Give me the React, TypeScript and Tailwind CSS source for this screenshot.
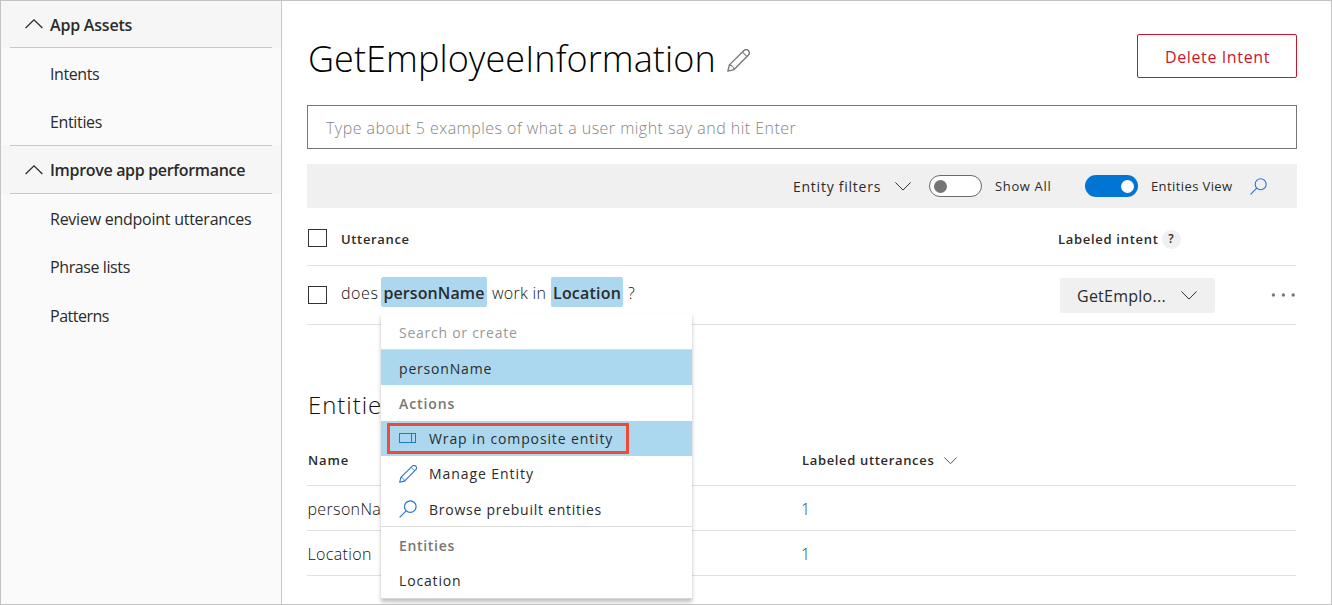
import type { ReactNode } from "react";

function ChevronUp() {
  return (
    <svg width="18" height="10" viewBox="0 0 18 10" fill="none" stroke="#2b2b2b" strokeWidth="1.3">
      <path d="M0.6 9 L9 0.9 L17.4 9" />
    </svg>
  );
}

function ChevronDown({ width, height }: { width: number; height: number }) {
  return (
    <svg width={width} height={height} viewBox="0 0 16 9" fill="none" stroke="#333" strokeWidth="1" className="shrink-0">
      <path d="M0.4 0.4 L8 8.1 L15.6 0.4" />
    </svg>
  );
}

function Pencil({ size, color }: { size: number; color: string }) {
  return (
    <svg width={size} height={size} viewBox="0 0 22 22" fill="none" stroke={color} strokeWidth="1.3" strokeLinejoin="round" className="shrink-0">
      <path d="M0.8 21.2 L2.3 15.2 L16.2 1.5 A2.8 2.8 0 0 1 20.5 5.8 L6.8 19.7 Z" />
      <path d="M2.3 15.2 C4.4 15.5 6.5 17.6 6.8 19.7" strokeWidth="1.1" />
      <path d="M14.8 2.9 L19.1 7.2" strokeWidth="1" />
    </svg>
  );
}

function Search({ size }: { size: number }) {
  return (
    <svg width={size} height={size} viewBox="0 0 18 18" fill="none" stroke="#2a72d4" strokeWidth="1.15" className="shrink-0">
      <circle cx="11.3" cy="6.6" r="5.8" />
      <path d="M7.1 10.8 L0.6 17.3" />
    </svg>
  );
}

function Composite() {
  return (
    <svg width="18" height="11" viewBox="0 0 18 11" fill="none" stroke="#1f78d1" strokeWidth="1" className="shrink-0">
      <rect x="0.5" y="0.5" width="16" height="9" />
      <path d="M12.5 0.5 V9.5" />
    </svg>
  );
}

function NavHeader({ children, first }: { children: ReactNode; first?: boolean }) {
  return (
    <div className={first ? "h-[47px] bg-[#f6f6f6] px-[9px]" : "h-[49px] bg-[#f6f6f6] px-[9px]"}>
      <div
        className={
          first
            ? "flex h-full items-center gap-[7px] border-b border-[#c8c8c8] pl-[15px]"
            : "flex h-full items-center gap-[7px] border-y border-[#c8c8c8] pl-[15px]"
        }
      >
        <ChevronUp />
        {children}
      </div>
    </div>
  );
}

function NavItem({ children }: { children: ReactNode }) {
  return <a className="flex h-12 items-center pl-[49px] text-base">{children}</a>;
}

function Checkbox() {
  return <span className="block h-[18px] w-[19px] shrink-0 border border-[#333]" />;
}

function EntityRow({ name, count }: { name: string; count: number }) {
  return (
    <div className="flex h-[45px] items-center border-b border-[#e1e1e1] pt-[2px] text-base font-light text-[#111]">
      <span className="w-[494px] pl-[0.5px] tracking-[0.35px]">
        <span className="block w-[73px] overflow-hidden">{name}</span>
      </span>
      <span className="text-[#1d3f66]">{count}</span>
    </div>
  );
}

export default function App() {
  return (
    <div className="flex h-[605px] w-[1332px] overflow-hidden border border-[#c3c3c3] bg-white font-['Open_Sans',sans-serif] whitespace-nowrap text-[#2b2b2b]">
      <aside className="flex w-[281px] shrink-0 flex-col border-r border-[#c8c8c8] bg-[#fafafa]">
        <NavHeader first>
          <span className="pt-[2px] text-base font-semibold tracking-[-0.2px]">App Assets</span>
        </NavHeader>
        <nav className="h-[97px] pt-[2px]">
          <NavItem><span className="tracking-[-0.4px]">Intents</span></NavItem>
          <NavItem><span className="tracking-[-0.35px]">Entities</span></NavItem>
        </nav>
        <NavHeader>
          <span className="text-base font-semibold tracking-[-0.32px]">Improve app performance</span>
        </NavHeader>
        <nav className="pt-[1px]">
          <NavItem><span className="tracking-[-0.25px]">Review endpoint utterances</span></NavItem>
          <NavItem><span className="tracking-[-0.4px]">Phrase lists</span></NavItem>
          <NavItem><span className="pt-px tracking-[-0.5px]">Patterns</span></NavItem>
        </nav>
      </aside>

      <main className="relative flex-1 pt-[33px] pr-[34px] pl-[25px]">
        <header className="flex h-11 items-center">
          <h1 className="pt-[6px] pl-px text-4xl leading-[44px] font-light tracking-[0.08px] text-black">GetEmployeeInformation</h1>
          <span className="ml-[11px] pt-[9px]"><Pencil size={23} color="#777" /></span>
          <button className="ml-auto h-11 w-40 rounded-[2px] border border-[#c9142b] pt-[2px] pl-px text-base tracking-[0.62px] text-[#c9142b]">
            Delete Intent
          </button>
        </header>

        <div className="mt-[27px] flex h-11 items-center border border-[#767676] pt-[2px] pl-[18px] text-base font-light tracking-[0.47px] text-[#858585]">
          Type about 5 examples of what a user might say and hit Enter
        </div>

        <div className="mt-[15px] flex h-11 items-center bg-[#f0f0f0] pl-[486px]">
          <span className="w-[102px] pt-[2px] text-sm tracking-[0.75px]">Entity filters</span>
          <ChevronDown width={16} height={9} />
          <span className="ml-[18px] flex h-[22px] w-[53px] items-center rounded-full border border-[#6b6b6b] bg-white pl-1">
            <span className="size-[13px] rounded-full bg-[#757575]" />
          </span>
          <span className="ml-[13px] w-[90px] pt-[2px] text-[13px] tracking-[0.65px]">Show All</span>
          <span className="flex h-[22px] w-[53px] items-center justify-end rounded-full bg-[#0075d4] pr-1">
            <span className="size-[13px] rounded-full bg-white" />
          </span>
          <span className="ml-[13px] w-[99px] pt-[2px] text-[13px] tracking-[0.4px]">Entities View</span>
          <Search size={17} />
        </div>

        <div className="mr-px flex h-[58px] items-center border-b border-[#e1e1e1] pt-[5px] text-[13px] font-semibold">
          <span className="-mt-[2px] ml-px"><Checkbox /></span>
          <span className="ml-[14px] w-[717px] pt-px tracking-[0.65px]">Utterance</span>
          <span className="pt-px tracking-[0.7px]">Labeled intent</span>
          <span className="ml-[3px] flex size-[19px] items-center justify-center rounded-full bg-[#f0f0f0] text-xs">?</span>
        </div>

        <div className="mr-px flex h-[59px] items-center border-b border-[#e1e1e1]">
          <span className="ml-px"><Checkbox /></span>
          <div className="ml-[14px] flex w-[719px] items-center pb-[6px] text-base font-light text-[#111]">
            <span className="w-10 pt-[2px] tracking-[0.6px]">does</span>
            <b className="flex h-[30px] w-[106px] items-center justify-center rounded-[2px] bg-[#acd8ef] pt-[2px] font-semibold tracking-[0.1px] text-[#2b2b2b]">personName</b>
            <span className="w-16 pt-[2px] pl-[5px] tracking-[0.3px]">work in</span>
            <b className="flex h-[30px] w-[72px] items-center justify-center rounded-[2px] bg-[#acd8ef] pt-[2px] font-semibold tracking-[0.2px] text-[#2b2b2b]">Location</b>
            <span className="pt-[2px] pl-[5px]">?</span>
          </div>
          <button className="flex h-[35px] w-[155px] items-center rounded-[2px] bg-[#f0f0f0] pl-[17px] text-base">
            <span className="w-[103px] pt-[2px] text-left tracking-[0.25px]">GetEmplo...</span>
            <ChevronDown width={18} height={9} />
          </button>
          <svg width="25" height="4" viewBox="0 0 25 4" fill="#777" className="ml-auto">
            <circle cx="2.4" cy="2" r="1.7" />
            <circle cx="12.4" cy="2" r="1.7" />
            <circle cx="22.2" cy="2" r="1.7" />
          </svg>
        </div>

        <h2 className="mt-[60px] mb-px h-10 w-[74px] overflow-hidden pl-px text-2xl leading-10 font-light tracking-[0.95px] text-[#111]">Entities</h2>
        <div className="mr-px flex h-[60px] items-center border-b border-[#e1e1e1] pt-[11px] text-[13px] font-semibold">
          <span className="w-[495px] pl-px tracking-[0.9px]">Name</span>
          <span className="w-[142px] tracking-[0.66px]">Labeled utterances</span>
          <ChevronDown width={13} height={7.5} />
        </div>
        <div className="mr-px">
          <EntityRow name="personName" count={1} />
          <EntityRow name="Location" count={1} />
        </div>

        <div className="absolute top-[313px] left-[99px] flex w-[311px] flex-col border-b border-[#d8d8d8] bg-white text-sm shadow-[0_3px_4px_rgba(0,0,0,0.25)]">
          <div className="flex h-9 items-center border-b border-[#dcdcdc] pt-[3px] pl-[18px] tracking-[0.74px] text-[#999]">Search or create</div>
          <div className="flex h-[35px] items-center bg-[#acd8ef] pt-[3px] pl-[18px] tracking-[0.82px]">personName</div>
          <div className="flex h-9 items-center pt-[2px] pl-[18px] font-semibold tracking-[0.9px] text-[#767676]">Actions</div>
          <div className="relative flex h-[35px] items-center gap-3 bg-[#acd8ef] pl-[18px]">
            <Composite />
            <span className="tracking-[0.88px]">Wrap in composite entity</span>
            <span className="absolute top-[2px] left-[6px] h-[31px] w-[242px] border-3 border-[#ee4a36]" />
          </div>
          <div className="flex h-[35px] items-center gap-3 pl-[18px]">
            <Pencil size={18} color="#2a72d4" />
            <span className="tracking-[0.93px]">Manage Entity</span>
          </div>
          <div className="flex h-9 items-center gap-3 border-b border-[#dcdcdc] pl-[18px]">
            <Search size={18} />
            <span className="pt-[2px] tracking-[0.74px]">Browse prebuilt entities</span>
          </div>
          <div className="flex h-9 items-center pt-px pl-[18px] font-semibold tracking-[0.68px] text-[#767676]">Entities</div>
          <div className="flex h-[35px] items-center pl-[18px] tracking-[0.85px]">Location</div>
        </div>
      </main>
    </div>
  );
}
